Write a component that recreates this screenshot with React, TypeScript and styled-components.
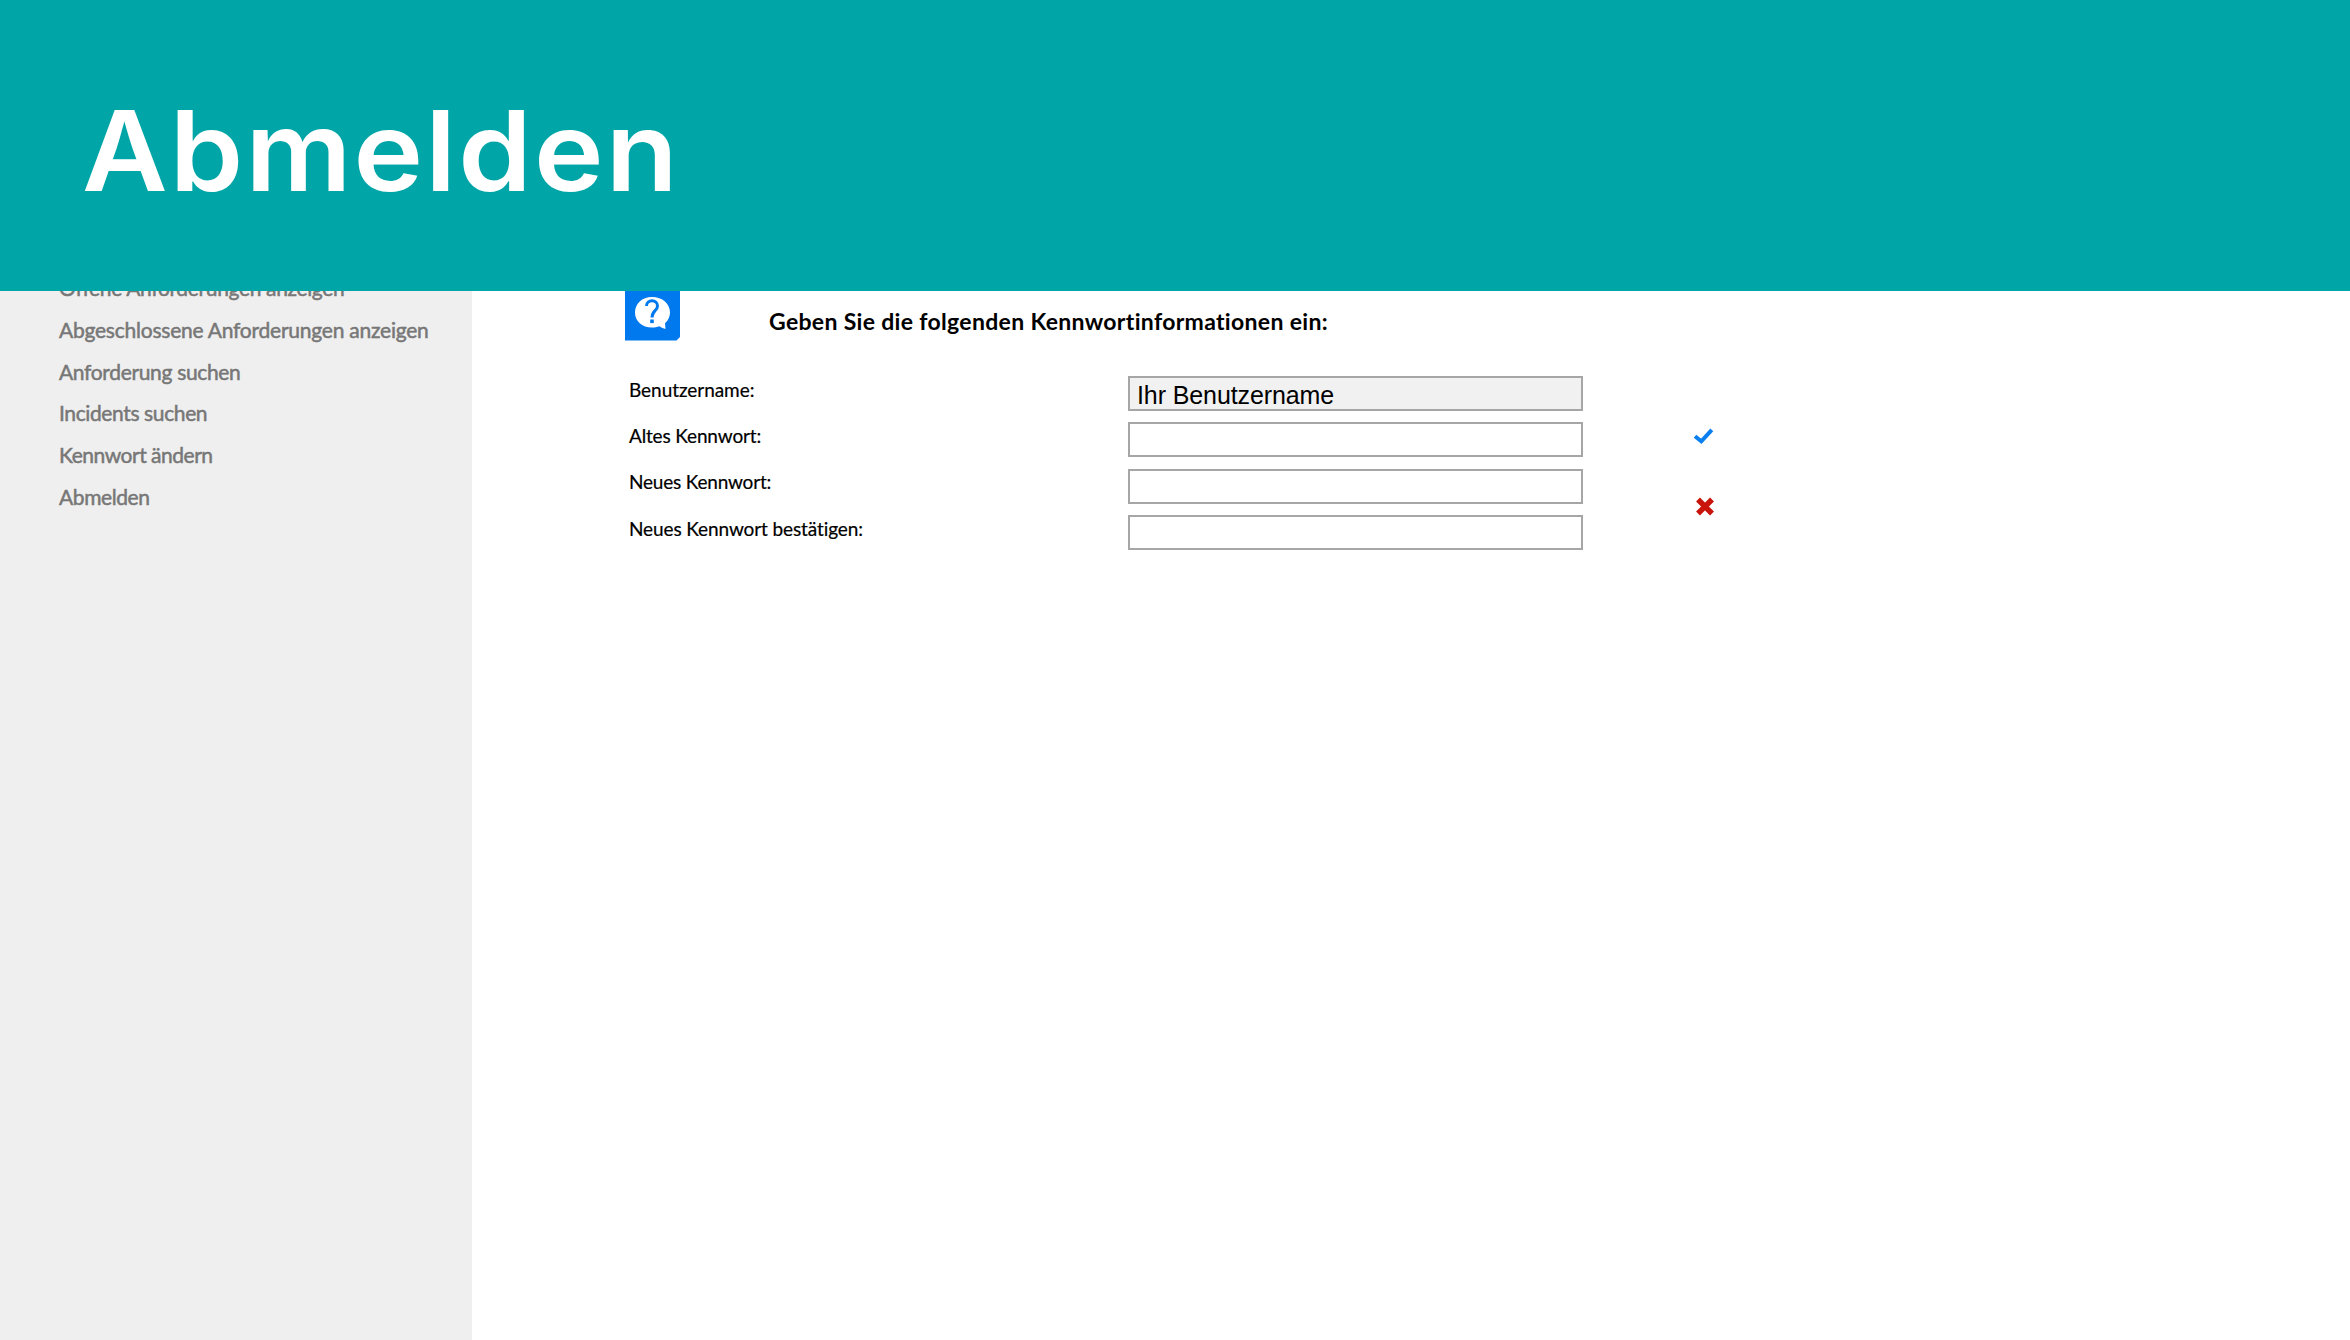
import React from "react";
import styled, { createGlobalStyle } from "styled-components";

const GlobalStyle = createGlobalStyle`
  *, *::before, *::after { box-sizing: border-box; }
  body {
    margin: 0;
    background: #fff;
    font-family: Lato, "Open Sans", sans-serif;
    font-variant-ligatures: none;
  }
`;

const Page = styled.div`
  display: flex;
  flex-direction: column;
  height: 1340px;
  overflow: hidden;
`;

const Banner = styled.header`
  flex: none;
  height: 291px;
  padding: 84px 0 0 82px;
  background: #00a6a7;
`;

const Title = styled.h1`
  width: max-content;
  margin: 0;
  color: #fff;
  font: 600 111px/134px Inter, sans-serif;
  letter-spacing: 2px;
  white-space: nowrap;
  transform: scaleX(1.061);
  transform-origin: left center;
`;

const Body = styled.div`
  flex: 1;
  min-height: 0;
  display: flex;
  overflow: hidden;
`;

const Sidebar = styled.nav`
  flex: none;
  width: 472px;
  margin-top: -24px;
  padding-left: 59px;
  background: #efefef;
`;

const NavItem = styled.a<{ $tracking: number }>`
  display: block;
  height: 41.8px;
  line-height: 41.8px;
  font-size: 21px;
  color: #777;
  -webkit-text-stroke: 0.5px #777;
  letter-spacing: ${(p) => p.$tracking}px;
  white-space: nowrap;
`;

const Main = styled.main`
  flex: 1;
  display: flex;
  flex-direction: column;
`;

const Intro = styled.div`
  display: flex;
  height: 75px;
  padding-left: 153px;
`;

const HelpIcon = styled.svg`
  flex: none;
  width: 56px;
  height: 51px;
`;

const Heading = styled.h2`
  margin: 15px 0 0 88px;
  font-size: 23px;
  line-height: 30px;
  font-weight: 700;
  color: #000;
  letter-spacing: 0.32px;
  white-space: nowrap;
`;

const FormArea = styled.div`
  display: flex;
  padding: 10px 0 0 157px;
`;

const Rows = styled.div`
  width: 954px;
`;

const Row = styled.label`
  display: grid;
  grid-template-columns: 499px 455px;
  height: 46.4px;
`;

const Label = styled.span<{ $tracking: number }>`
  padding-top: 1.5px;
  font-size: 19px;
  line-height: 24px;
  color: #000;
  -webkit-text-stroke: 0.2px #000;
  letter-spacing: ${(p) => p.$tracking}px;
  white-space: nowrap;
`;

const Field = styled.input`
  width: 455px;
  height: 35px;
  padding: 4px 0 0 7px;
  border: 2px solid #a6a6a6;
  border-radius: 0;
  background: #fff;
  color: #000;
  font: 25px/27px "Liberation Sans", Arial, sans-serif;
  letter-spacing: -0.1px;
  outline: none;
  &:read-only { background: #f1f1f1; }
`;

const Actions = styled.div`
  display: flex;
  flex-direction: column;
  padding: 51px 0 0 110px;
`;

const ActionIcon = styled.svg<{ $gap?: number }>`
  display: block;
  width: 22px;
  height: 20px;
  margin-top: ${(p) => p.$gap ?? 0}px;
`;

const navItems = [
  { text: "Offene Anforderungen anzeigen", tracking: -0.35 },
  { text: "Abgeschlossene Anforderungen anzeigen", tracking: -0.23 },
  { text: "Anforderung suchen", tracking: -0.33 },
  { text: "Incidents suchen", tracking: -0.38 },
  { text: "Kennwort ändern", tracking: -0.48 },
  { text: "Abmelden", tracking: -0.4 },
];

const fields = [
  { text: "Benutzername:", value: "Ihr Benutzername", tracking: -0.05 },
  { text: "Altes Kennwort:", value: "", tracking: -0.15 },
  { text: "Neues Kennwort:", value: "", tracking: -0.2 },
  { text: "Neues Kennwort bestätigen:", value: "", tracking: -0.11 },
];

export default function App() {
  return (
    <>
      <GlobalStyle />
      <Page>
        <Banner>
          <Title>Abmelden</Title>
        </Banner>
        <Body>
          <Sidebar>
            {navItems.map((n) => (
              <NavItem key={n.text} $tracking={n.tracking}>{n.text}</NavItem>
            ))}
          </Sidebar>
          <Main>
            <Intro>
              <HelpIcon viewBox="0 0 56 51">
                <path d="M0 0H55V46L51.500 49.500H0Z" fill="#0079ef" />
                <path d="M27 6C17 6 10 12.800 10 21.500S17 36.500 27 36.500C29.500 36.500 32 36.200 34.500 35.300C36.500 36.800 38.500 37.500 40.500 38L40 32.300C43.300 29.500 45 25.500 45 21.500C45 12.800 37.500 6 27 6Z" fill="#fff" />
                <path d="M21.500 15C21.500 8 32.500 8 32.500 15C32.500 20 27 19.500 27 26.500" fill="none" stroke="#0079ef" strokeWidth="3" />
                <rect x="25.200" y="28.500" width="3.600" height="3.600" fill="#0079ef" />
              </HelpIcon>
              <Heading>Geben Sie die folgenden Kennwortinformationen ein:</Heading>
            </Intro>
            <FormArea>
              <Rows>
                {fields.map((f) => (
                  <Row key={f.text}>
                    <Label $tracking={f.tracking}>{f.text}</Label>
                    <Field defaultValue={f.value} readOnly={f.value !== ""} />
                  </Row>
                ))}
              </Rows>
              <Actions>
                <ActionIcon viewBox="0 0 22 20">
                  <path d="M2 9.300L8.300 14.300L18.800 2.800" fill="none" stroke="#0a80f0" strokeWidth="4" />
                </ActionIcon>
                <ActionIcon viewBox="0 0 22 20" $gap={50}>
                  <path d="M5 2.500L19 16.500M19 2.500L5 16.500" fill="none" stroke="#c8140a" strokeWidth="5.500" />
                </ActionIcon>
              </Actions>
            </FormArea>
          </Main>
        </Body>
      </Page>
    </>
  );
}
